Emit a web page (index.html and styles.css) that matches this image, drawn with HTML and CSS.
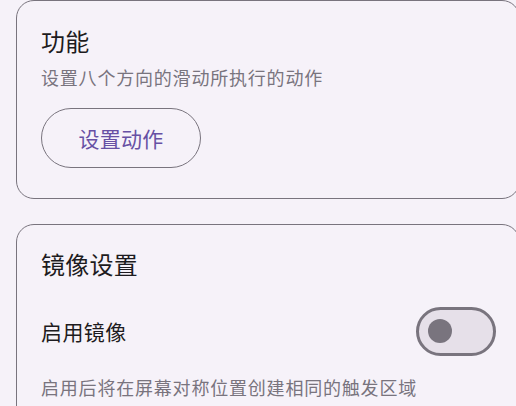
FILE: index.html
```html
<!DOCTYPE html>
<html lang="zh-CN">
<head>
<meta charset="utf-8">
<title>设置</title>
<link rel="stylesheet" href="styles.css">
</head>
<body>
<main class="page">
  <section class="card card-function">
    <h2 class="card-title">功能</h2>
    <p class="card-subtitle">设置八个方向的滑动所执行的动作</p>
    <div class="button-target">
      <button class="outlined-button" type="button">设置动作</button>
    </div>
  </section>
  <section class="card card-mirror">
    <h2 class="card-title">镜像设置</h2>
    <div class="switch-row">
      <span class="switch-label">启用镜像</span>
      <span class="switch" role="switch" aria-checked="false"><span class="switch-thumb"></span></span>
    </div>
    <p class="card-subtitle desc">启用后将在屏幕对称位置创建相同的触发区域</p>
  </section>
</main>
</body>
</html>
```

FILE: styles.css
```css
html, body {
  margin: 0;
  padding: 0;
  overflow: hidden;
  background: #f6f2f9;
}

body {
  font-family: "Noto Sans CJK SC", "Noto Sans", sans-serif;
  color: #1d1b20;
}

.page {
  display: flex;
  flex-direction: column;
  gap: 25px;
  padding-left: 16px;
  width: 600px;
}

.card {
  box-sizing: border-box;
  width: 504px;
  border: 1px solid #79747e;
  border-radius: 18px;
  padding: 24px;
  background: #f6f2f9;
}

.card-title {
  margin: -2px 0 0;
  font-size: 24px;
  line-height: 36px;
  font-weight: 400;
  letter-spacing: 0.25px;
}

.card-subtitle {
  margin: 6px 0 0;
  font-size: 18px;
  line-height: 24px;
  letter-spacing: 0.8px;
  color: #79747e;
}

.button-target {
  margin-top: 13px;
  height: 72px;
  display: flex;
  align-items: center;
}

.outlined-button {
  box-sizing: border-box;
  height: 60px;
  width: 160px;
  border: 1.5px solid #79747e;
  border-radius: 30px;
  background: transparent;
  font-family: "Noto Sans CJK SC", "Noto Sans", sans-serif;
  font-size: 21px;
  font-weight: 400;
  letter-spacing: 0.2px;
  color: #6750a4;
  padding: 0;
}

.card-mirror .card-title {
  margin-top: -3px;
}

.switch-row {
  margin-top: 13px;
  height: 72px;
  display: flex;
  align-items: center;
  justify-content: space-between;
  margin-right: -1px;
}

.switch-label {
  font-size: 21px;
  line-height: 28px;
  letter-spacing: 0.4px;
}

.switch {
  box-sizing: border-box;
  width: 80px;
  height: 49px;
  border: 3px solid #79747e;
  border-radius: 25px;
  background: #e6e0e9;
  display: flex;
  align-items: center;
  padding-left: 9px;
}

.switch-thumb {
  width: 24px;
  height: 24px;
  border-radius: 50%;
  background: #79747e;
}

.desc {
  margin-top: 8px;
}
```
